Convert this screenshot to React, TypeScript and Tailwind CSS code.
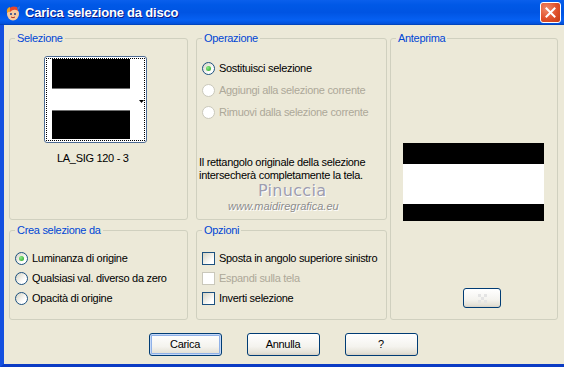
import clsx from 'clsx';

// Small XP-style building blocks

function Radio({ label, checked, disabled, row }: { label: string; checked?: boolean; disabled?: boolean; row: string }) {
  return (
    <div className={clsx('flex items-center gap-[4px] pl-[5px]', row)}>
      <span
        className={clsx(
          'flex h-[13px] w-[13px] shrink-0 items-center justify-center rounded-full border',
          disabled ? 'border-[#cac8bb] bg-white' : 'border-[#1c5180] bg-[linear-gradient(135deg,#d6d3c2,#ffffff_70%)]',
        )}
      >
        {checked && <span className="h-[5px] w-[5px] rounded-full bg-[radial-gradient(circle_at_35%_35%,#8bea86,#21a121)]" />}
      </span>
      <span className={disabled ? 'text-[#aca899]' : 'text-black'}>{label}</span>
    </div>
  );
}

function Check({ label, disabled }: { label: string; disabled?: boolean }) {
  return (
    <div className="flex h-[20px] items-center gap-[4px] pl-[5px]">
      <span
        className={clsx(
          'h-[13px] w-[13px] shrink-0 border',
          disabled ? 'border-[#cac8bb] bg-white' : 'border-[#1c5180] bg-[linear-gradient(135deg,#d6d3c2,#ffffff_75%)]',
        )}
      />
      <span className={disabled ? 'text-[#aca899]' : 'text-black'}>{label}</span>
    </div>
  );
}

function Group({ title, className, children }: { title: string; className?: string; children?: React.ReactNode }) {
  return (
    <fieldset className={clsx('flex flex-col rounded-[3px] border border-[#d0d0bf]', className)}>
      <legend className="ml-[5px] px-[2px] leading-[13px] text-[#0046d5]">{title}</legend>
      {children}
    </fieldset>
  );
}

function XpButton({ label, isDefault }: { label: string; isDefault?: boolean }) {
  return (
    <button
      className={clsx(
        'flex h-[23px] w-[73px] items-center justify-center rounded-[3px] border border-[#003c74] bg-[linear-gradient(to_bottom,#ffffff,#f4f3ee_60%,#e4e1d6_90%,#d6d0c5)] text-black',
        isDefault && 'shadow-[inset_0_0_0_1px_#c5d8f7,inset_0_0_0_2px_#8fb1e8]',
      )}
    >
      {label}
    </button>
  );
}

function TitleIcon() {
  return (
    <svg width="16" height="16" viewBox="0 0 16 16">
      <ellipse cx="8" cy="9" rx="6" ry="6.5" fill="#f5c9a0" />
      <path d="M3 5 Q6 0 12 2 L13 6 Q9 3 5 7 Z" fill="#e8462b" />
      <path d="M2 8 Q1 3 5 2 L5 6 Z" fill="#f0a020" />
      <circle cx="6" cy="9" r="1" fill="#1d3c8a" />
      <circle cx="10" cy="9" r="1" fill="#1d3c8a" />
      <path d="M6 12 Q8 13.5 10 12" stroke="#b03020" strokeWidth="1" fill="none" />
      <path d="M12 3 L15 1 L14 5 Z" fill="#3a78e0" />
    </svg>
  );
}

export default function App() {
  return (
    <div className="flex h-[367px] w-[564px] flex-col overflow-hidden bg-[#ece9d8] font-['Liberation_Sans',Arial,sans-serif] text-[11px] tracking-[-0.3px] text-black">
      {/* title bar */}
      <div className="flex h-[25px] shrink-0 items-center bg-[linear-gradient(to_bottom,#0a5fec,#0058e6_20%,#0054e3_50%,#0660f2_80%,#0352dc_94%,#003fb0)] pl-[5px] pr-[3px]">
        <TitleIcon />
        <span className="ml-[4px] text-[13px] font-bold tracking-[-0.2px] text-white [text-shadow:1px_1px_#0a1883]">
          Carica selezione da disco
        </span>
        <div className="ml-auto flex h-[21px] w-[21px] items-center justify-center rounded-[3px] border border-white bg-[radial-gradient(circle_at_30%_30%,#f08a6a,#e0502a_55%,#c43a14)]">
          <svg width="11" height="11" viewBox="0 0 11 11">
            <path d="M1.5 1.5 L9.5 9.5 M9.5 1.5 L1.5 9.5" stroke="white" strokeWidth="2" strokeLinecap="square" />
          </svg>
        </div>
      </div>

      {/* client area */}
      <div className="flex flex-1 flex-col border-b-[3px] border-l-[4px] border-b-[#0b3bc4] border-l-[#1450e0]">
        <div className="flex pl-[5px] pt-[7px]">
          {/* left column */}
          <div className="flex w-[179px] flex-col gap-[4px]">
            <Group title="Selezione" className="h-[188px] items-start">
              <div className="ml-[34px] mt-[11px] h-[87px] w-[103px] rounded-[3px] border border-[#4d6b93] bg-white p-[1px]">
                <div className="flex h-full items-center border border-dotted border-black pl-[5px]">
                  <div className="flex h-[80px] w-[78px] flex-col self-start">
                    <div className="h-[29px] bg-black" />
                    <div className="h-[1px] bg-[#6f6f6f]" />
                    <div className="h-[21px] bg-white" />
                    <div className="h-[1px] bg-[#6f6f6f]" />
                    <div className="h-[28px] bg-black" />
                  </div>
                  <svg className="ml-[9px] mt-[3px]" width="5" height="3" viewBox="0 0 5 3">
                    <path d="M0 0 H5 L2.5 3 Z" fill="black" />
                  </svg>
                </div>
              </div>
              <div className="ml-[47px] mt-[9px] leading-[13px]">LA_SIG 120 - 3</div>
            </Group>
            <Group title="Crea selezione da" className="h-[96px]">
              <div className="mt-[11px]">
                <Radio row="h-[20px]" label="Luminanza di origine" checked />
                <Radio row="h-[20px]" label="Qualsiasi val. diverso da zero" />
                <Radio row="h-[20px]" label="Opacità di origine" />
              </div>
            </Group>
          </div>

          {/* middle column */}
          <div className="ml-[8px] flex w-[191px] flex-col gap-[4px]">
            <Group title="Operazione" className="h-[188px]">
              <div className="mt-[12px]">
                <Radio row="h-[22px]" label="Sostituisci selezione" checked />
                <Radio row="h-[22px]" label="Aggiungi alla selezione corrente" disabled />
                <Radio row="h-[22px]" label="Rimuovi dalla selezione corrente" disabled />
              </div>
              <p className="mt-[33px] pl-[2px] leading-[13px]">
                Il rettangolo originale della selezione
                <br />
                intersecherà completamente la tela.
              </p>
              <div className="ml-[61px] font-['DejaVu_Sans',sans-serif] text-[16px] leading-[17px] tracking-[0.3px] text-[#9d9db0] [text-shadow:1px_1px_#ffffff]">
                Pinuccia
              </div>
              <div className="ml-[31px] leading-[14px] italic tracking-normal text-[#8c8c8c] [text-shadow:1px_1px_#ffffff]">
                www.maidiregrafica.eu
              </div>
            </Group>
            <Group title="Opzioni" className="h-[96px]">
              <div className="mt-[11px]">
                <Check label="Sposta in angolo superiore sinistro" />
                <Check label="Espandi sulla tela" disabled />
                <Check label="Inverti selezione" />
              </div>
            </Group>
          </div>

          {/* right column */}
          <div className="ml-[3px] w-[168px]">
            <Group title="Anteprima" className="h-[288px] items-start">
              <div className="ml-[12px] mt-[98px] flex h-[78px] w-[141px] flex-col">
                <div className="h-[21px] bg-black" />
                <div className="h-[40px] bg-white" />
                <div className="h-[17px] bg-black" />
              </div>
              <div className="ml-[72px] mt-[67px] flex h-[20px] w-[38px] items-center justify-center rounded-[3px] border border-[#003c74] bg-[linear-gradient(to_bottom,#ffffff,#f4f3ee_60%,#e4e1d6_90%,#d6d0c5)]">
                <div className="grid grid-cols-3">
                  <span className="h-[3px] w-[3px] bg-[#e4e4e4]" />
                  <span className="h-[3px] w-[3px]" />
                  <span className="h-[3px] w-[3px] bg-[#e4e4e4]" />
                  <span className="h-[3px] w-[3px]" />
                  <span className="h-[3px] w-[3px] bg-[#e4e4e4]" />
                  <span className="h-[3px] w-[3px]" />
                  <span className="h-[3px] w-[3px] bg-[#e4e4e4]" />
                  <span className="h-[3px] w-[3px]" />
                  <span className="h-[3px] w-[3px] bg-[#e4e4e4]" />
                </div>
              </div>
            </Group>
          </div>
        </div>

        {/* buttons */}
        <div className="mt-[13px] flex justify-center gap-[25px] pr-[2px]">
          <XpButton label="Carica" isDefault />
          <XpButton label="Annulla" />
          <XpButton label="?" />
        </div>
      </div>
    </div>
  );
}
